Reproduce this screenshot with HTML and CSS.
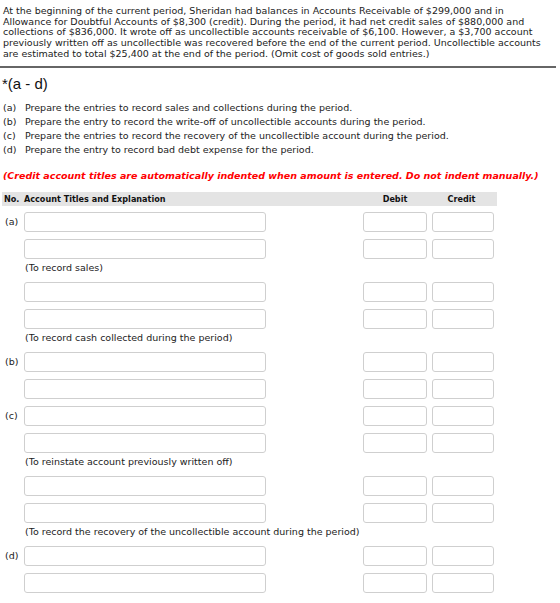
FILE: index.html
```html
<!DOCTYPE html>
<html lang="en">
<head>
    <meta charset="UTF-8">
    <meta name="viewport" content="width=device-width, initial-scale=1.0">
    <title>Allowance for Doubtful Accounts</title>
    <link rel="stylesheet" href="styles.css">
</head>
<body>

    <p class="problem">At the beginning of the current period, Sheridan had balances in Accounts Receivable of $299,000 and in Allowance for Doubtful Accounts of $8,300 (credit). During the period, it had net credit sales of $880,000 and collections of $836,000. It wrote off as uncollectible accounts receivable of $6,100. However, a $3,700 account previously written off as uncollectible was recovered before the end of the current period. Uncollectible accounts are estimated to total $25,400 at the end of the period. (Omit cost of goods sold entries.)</p>

    <h3 class="part">*(a - d)</h3>

    <ol class="tasks">
        <li><span class="tag">(a)</span>Prepare the entries to record sales and collections during the period.</li>
        <li><span class="tag">(b)</span>Prepare the entry to record the write-off of uncollectible accounts during the period.</li>
        <li><span class="tag">(c)</span>Prepare the entries to record the recovery of the uncollectible account during the period.</li>
        <li><span class="tag">(d)</span>Prepare the entry to record bad debt expense for the period.</li>
    </ol>

    <p class="warning">(Credit account titles are automatically indented when amount is entered. Do not indent manually.)</p>

    <div class="journal" id="journal">
        <div class="journal-head">
            <span class="no">No.</span>
            <span>Account Titles and Explanation</span>
            <span></span>
            <span class="amt">Debit</span>
            <span class="amt">Credit</span>
        </div>
    </div>

    <script>
        // Filas del diario: cada grupo lleva sus líneas y la explicación al final
        const grupos = [
            { no: "(a)", lineas: 2, nota: "(To record sales)" },
            { no: "", lineas: 2, nota: "(To record cash collected during the period)" },
            { no: "(b)", lineas: 2, nota: "" },
            { no: "(c)", lineas: 2, nota: "(To reinstate account previously written off)" },
            { no: "", lineas: 2, nota: "(To record the recovery of the uncollectible account during the period)" },
            { no: "(d)", lineas: 2, nota: "" }
        ];

        const journal = document.getElementById("journal");

        grupos.forEach(function(g) {
            for (let i = 0; i < g.lineas; i++) {
                const fila = document.createElement("div");
                fila.className = "line";
                fila.innerHTML = `
                    <span class="no">${i === 0 ? g.no : ""}</span>
                    <input type="text" class="acct">
                    <span></span>
                    <input type="text" class="debit">
                    <input type="text" class="credit">
                `;
                journal.appendChild(fila);
            }
            if (g.nota) {
                const nota = document.createElement("div");
                nota.className = "note";
                nota.textContent = g.nota;
                journal.appendChild(nota);
            }
        });
    </script>

</body>
</html>
```

FILE: styles.css
```css
body {
    margin: 0;
    font-family: "DejaVu Sans", Verdana, sans-serif;
    font-size: 9.5px;
    color: #222;
}

.problem {
    margin: 6px 0 0 0;
    padding: 0 12px 6px 3px;
    width: 541px;
    line-height: 10.7px;
    border-bottom: 2px solid #666;
}

.part {
    margin: 7px 0 0 2px;
    font-family: "Liberation Sans", Arial, sans-serif;
    font-size: 15px;
    font-weight: normal;
    line-height: 17px;
    color: #111;
}

.tasks {
    list-style: none;
    margin: 9px 0 0 0;
    padding: 0 0 0 3px;
    line-height: 14.3px;
}

.tag {
    display: inline-block;
    width: 22px;
}

.warning {
    margin: 11px 0 0 3px;
    color: #f00;
    font-weight: bold;
    font-style: italic;
    line-height: 14px;
}

/* Tabla del diario */
.journal {
    margin: 9px 0 0 2px;
    width: 495px;
}

.journal-head,
.line {
    display: grid;
    grid-template-columns: 22px 242px 97px 64px 67px;
}

.journal-head {
    height: 14px;
    line-height: 14px;
    background-color: #e4e4e4;
    font-family: "DejaVu Sans Condensed", "DejaVu Sans", sans-serif;
    font-size: 9px;
    font-weight: bold;
    color: #111;
}

.journal-head .no {
    padding-left: 2px;
}

.journal-head .amt {
    text-align: center;
}

.journal-head .amt:last-child {
    padding-left: 5px;
    padding-right: 3px;
}

.line {
    height: 27px;
    padding-top: 6px;
    box-sizing: border-box;
    align-items: start;
}

.line .no {
    padding-left: 3px;
    line-height: 20px;
}

.line input {
    box-sizing: border-box;
    height: 20px;
    margin: 0;
    border: 1px solid #cfcfcf;
    border-radius: 3px;
    background: #fff;
    font: inherit;
}

.acct {
    width: 242px;
}

.debit {
    width: 64px;
}

.credit {
    width: 62px;
    margin-left: 5px !important;
}

.note {
    height: 16px;
    line-height: 16px;
    padding-left: 23px;
}
```
